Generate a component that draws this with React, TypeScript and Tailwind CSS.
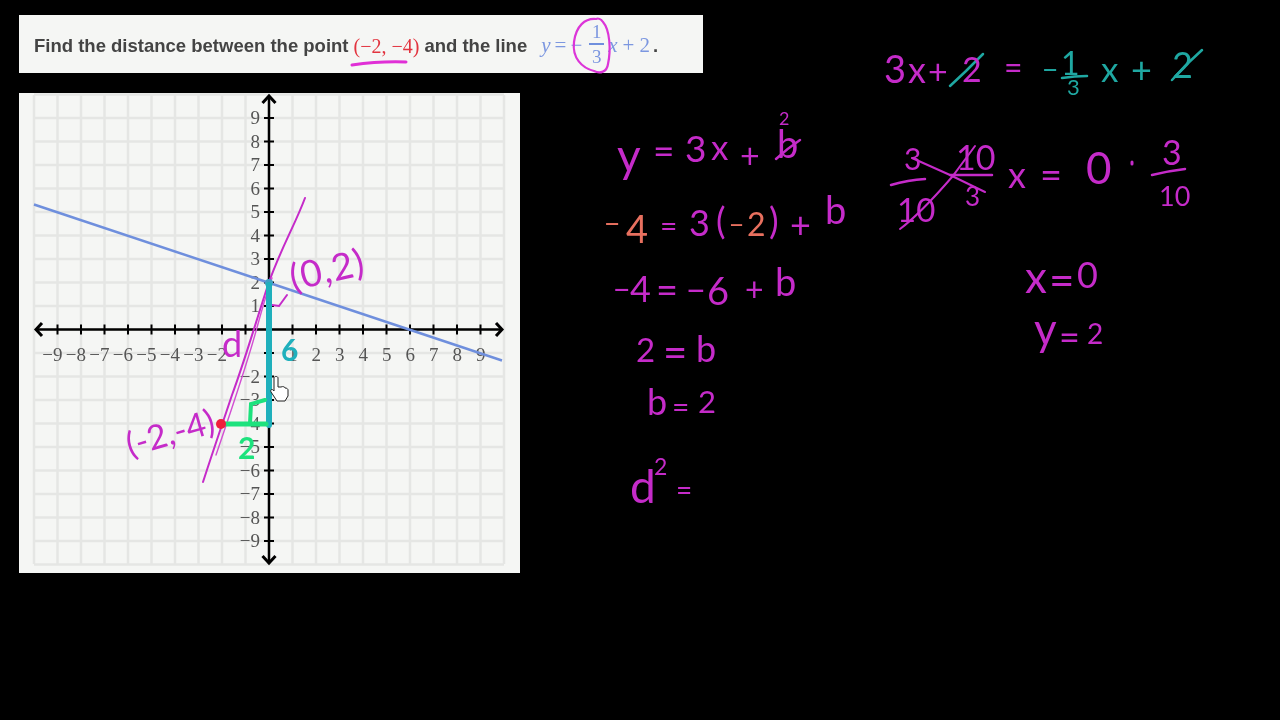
const PINK = "fill-[#c52bc9]";
const TEAL = "fill-[#1fa8a2]";
const ORANGE = "fill-[#e8705f]";

// ink tokens on the blackboard: text, x, baseline y, font size, colour
const ink: [string, number, number, number, string][] = [
  ["y", 617, 172, 46, PINK],
  ["=", 653, 164, 37, PINK],
  ["3", 685, 162, 37, PINK],
  ["x", 711, 160, 35, PINK],
  ["+", 740, 168, 34, PINK],
  ["b", 777, 158, 38, PINK],
  ["2", 779, 125, 18, PINK],

  ["−", 604, 234, 28, ORANGE],
  ["4", 626, 243, 38, ORANGE],
  ["=", 660, 237, 30, PINK],
  ["3", 689, 236, 36, PINK],
  ["(", 716, 234, 36, PINK],
  ["−", 729, 234, 26, ORANGE],
  ["2", 747, 236, 32, ORANGE],
  [")", 769, 234, 36, PINK],
  ["+", 790, 238, 36, PINK],
  ["b", 825, 224, 38, PINK],

  ["−", 613, 300, 30, PINK],
  ["4", 630, 302, 36, PINK],
  ["=", 656, 304, 38, PINK],
  ["−", 686, 303, 34, PINK],
  ["6", 707, 305, 38, PINK],
  ["+", 745, 301, 32, PINK],
  ["b", 775, 296, 38, PINK],

  ["2", 636, 362, 33, PINK],
  ["=", 663, 367, 42, PINK],
  ["b", 696, 362, 36, PINK],

  ["b", 647, 415, 36, PINK],
  ["=", 672, 418, 30, PINK],
  ["2", 698, 413, 31, PINK],

  ["d", 630, 503, 46, PINK],
  ["2", 654, 475, 23, PINK],
  ["=", 676, 500, 28, PINK],

  ["3", 884, 83, 38, PINK],
  ["x", 908, 83, 36, PINK],
  ["+", 928, 84, 34, PINK],
  ["2", 962, 82, 34, PINK],
  ["=", 1004, 79, 32, PINK],
  ["−", 1042, 80, 28, TEAL],
  ["1", 1061, 75, 32, TEAL],
  ["3", 1067, 95, 22, TEAL],
  ["x", 1101, 82, 35, TEAL],
  ["+", 1131, 83, 36, TEAL],
  ["2", 1172, 78, 36, TEAL],

  ["3", 904, 170, 30, PINK],
  ["10", 956, 170, 34, PINK],
  ["10", 897, 222, 33, PINK],
  ["3", 965, 206, 26, PINK],
  ["x", 1008, 188, 36, PINK],
  ["=", 1040, 189, 38, PINK],
  ["0", 1086, 184, 44, PINK],
  ["3", 1162, 165, 34, PINK],
  ["10", 1159, 206, 27, PINK],

  ["x", 1025, 293, 44, PINK],
  ["=", 1049, 296, 44, PINK],
  ["0", 1077, 288, 36, PINK],
  ["y", 1034, 345, 44, PINK],
  ["=", 1059, 350, 36, PINK],
  ["2", 1087, 344, 28, PINK],
];

// strokes that are not characters: crossings, fraction bars, marks
const strokes: [string, string, number][] = [
  ["M950 86 L966 71 L983 54", "#1fa8a2", 2.5],
  ["M1172 80 L1186 65 L1202 50", "#1fa8a2", 2.5],
  ["M1062 78 Q1075 76 1087 76", "#1fa8a2", 2.5],
  ["M776 159 Q788 148 800 140", "#c52bc9", 2.5],
  ["M891 185 Q908 180 925 179", "#c52bc9", 2.5],
  ["M950 175 L992 175", "#c52bc9", 2.5],
  ["M912 158 L950 175 L985 192", "#c52bc9", 2],
  ["M900 229 Q920 214 952 177 L975 146", "#c52bc9", 2],
  ["M1152 175 Q1168 171 1185 169", "#c52bc9", 2.5],
  ["M1132 162 L1132 164", "#c52bc9", 3],
  // annotations over the question
  ["M352 65 Q380 61 406 62", "#e02fd6", 3],
  ["M596 19 C585 18 576 26 574 42 C572 58 582 68 594 71 C600 74 607 72 608 64 C611 50 610 30 603 22 C601 19 598 18 596 19 Z", "#dc35d8", 2.2],
];

const unit = 23.5;
const ox = 269;
const oy = 329.5;
const steps = [-9, -8, -7, -6, -5, -4, -3, -2, -1, 1, 2, 3, 4, 5, 6, 7, 8, 9];
const grid = [-10, ...steps, 0, 10];

const Chart = () => (
  <svg width="501" height="480" viewBox="19 93 501 480" className="block">
    {grid.map((n) => (
      <g key={n} className="stroke-[#e5e6e4]" strokeWidth="2.5">
        <line x1={ox + n * unit} y1={95} x2={ox + n * unit} y2={564} />
        <line x1={34} y1={oy - n * unit} x2={504} y2={oy - n * unit} />
      </g>
    ))}
    <g className="stroke-black" strokeWidth="2.5" fill="none">
      <line x1={36} y1={oy} x2={502} y2={oy} />
      <line x1={ox} y1={97} x2={ox} y2={563} />
      <path d="M42 323 L36 329.5 L42 336" strokeWidth="3" />
      <path d="M496 323 L502 329.5 L496 336" strokeWidth="3" />
      <path d="M262.5 103 L269 96 L275.5 103" strokeWidth="3" />
      <path d="M262.5 556 L269 563 L275.5 556" strokeWidth="3" />
      {steps.map((n) => (
        <g key={n} strokeWidth="2">
          <line x1={ox + n * unit} y1={oy - 5} x2={ox + n * unit} y2={oy + 5} />
          <line x1={ox - 5} y1={oy - n * unit} x2={ox + 5} y2={oy - n * unit} />
        </g>
      ))}
    </g>
    <g className="font-['Liberation_Serif'] text-[19px] fill-[#555]">
      {steps.filter((n) => n !== -1).map((n) => (
        <text key={n} x={ox + n * unit + 5} y={361} textAnchor="end">
          {n < 0 ? `\u2212${-n}` : n}
        </text>
      ))}
      {steps.filter((n) => n !== -1).map((n) => (
        <text key={n} x={260} y={oy - n * unit + 6} textAnchor="end">
          {n < 0 ? `\u2212${-n}` : n}
        </text>
      ))}
    </g>
    <line x1={34} y1={204.5} x2={502} y2={360.5} className="stroke-[#6f8fdd]" strokeWidth="2.5" />
  </svg>
);

const Overlay = () => (
  <svg width="1280" height="720" className="absolute inset-0 pointer-events-none">
    {/* graph annotations */}
    <g fill="none" strokeLinecap="round">
      <path d="M203 482 C215 445 222 425 232 395 C245 360 258 315 268 285 C280 250 295 225 305 198" stroke="#c52bc9" strokeWidth="2" />
      <path d="M216 455 C228 420 240 385 252 345 C258 325 264 300 272 278" stroke="#d24fd2" strokeWidth="1.4" />
      <path d="M272 305 L279 306 L287 295" stroke="#c52bc9" strokeWidth="2" />
      <circle cx="269" cy="283" r="4" fill="#3f9fc4" />
      <path d="M269 285 L269 425" stroke="#1fb0bc" strokeWidth="6" />
      <path d="M222 424 L266 424" stroke="#1de27d" strokeWidth="5" />
      <path d="M250 423 L251 404 L265 400" stroke="#1de27d" strokeWidth="4" />
      <circle cx="221" cy="424" r="5" fill="#f01e3c" />
      {strokes.map(([d, color, w], i) => (
        <path key={i} d={d} stroke={color} strokeWidth={w} />
      ))}
    </g>
    <g className="font-['Lato'] font-bold">
      <text x="238" y="459" className="fill-[#1de27d] text-[30px]">2</text>
      <text x="281" y="361" className="fill-[#1fb0bc] text-[30px]">6</text>
    </g>
    <g className="font-['Lato']">
      <text x="222" y="357" className="fill-[#c52bc9] text-[36px]">d</text>
      <text transform="translate(293 291) rotate(-13)" className="fill-[#c52bc9] text-[37px]" letterSpacing="1">(0,2)</text>
      <text transform="translate(130 457) rotate(-16)" className="fill-[#c52bc9] text-[34px]">(-2,-4)</text>
      {ink.map(([t, x, y, size, color], i) => (
        <text key={i} x={x} y={y} fontSize={size} className={color}>
          {t}
        </text>
      ))}
    </g>
    {/* hand cursor */}
    <path
      d="M274 378 C274 376 278 376 278 378 L278 387 L281 387 C283 386 285 387 285 388 C287 388 288 389 288 390 L288 396 L285 401 L277 401 L271 392 C270 390 272 388 274 391 Z"
      fill="#fff"
      stroke="#222"
      strokeWidth="1"
    />
  </svg>
);

const App = () => {
  return (
    <div className="relative w-[1280px] h-[720px] overflow-hidden bg-black pt-[15px] pl-[19px] blur-[0.5px]">
      <div className="flex items-center w-[684px] h-[58px] pl-[15px] pt-[3px] bg-[#f5f6f4] font-['Liberation_Sans'] font-bold text-[18.5px] text-[#444]">
        <span>Find the distance between the point</span>
        <span className="ml-[5px] font-['Liberation_Serif'] font-normal text-[20px] text-[#e2343f]">(−2, −4)</span>
        <span className="ml-[5px]">and the line</span>
        <div className="flex items-center ml-[14px] gap-[4px] font-['Liberation_Serif'] font-normal text-[21px] text-[#7c97e0]">
          <span className="italic">y</span>
          <span>=</span>
          <span>−</span>
          <div className="flex flex-col items-center w-[15px] ml-[3px] -mt-[3px] leading-[23px] text-[19px]">
            <span>1</span>
            <span className="w-full h-[2px] bg-[#6f8fdd]" />
            <span>3</span>
          </div>
          <span className="italic">x</span>
          <span className="ml-[1px]">+</span>
          <span className="ml-[1px]">2</span>
        </div>
        <span className="ml-[3px]">.</span>
      </div>
      <div className="mt-[20px] w-[501px] h-[480px] bg-[#f5f6f4]">
        <Chart />
      </div>
      <Overlay />
    </div>
  );
};

export default App;
